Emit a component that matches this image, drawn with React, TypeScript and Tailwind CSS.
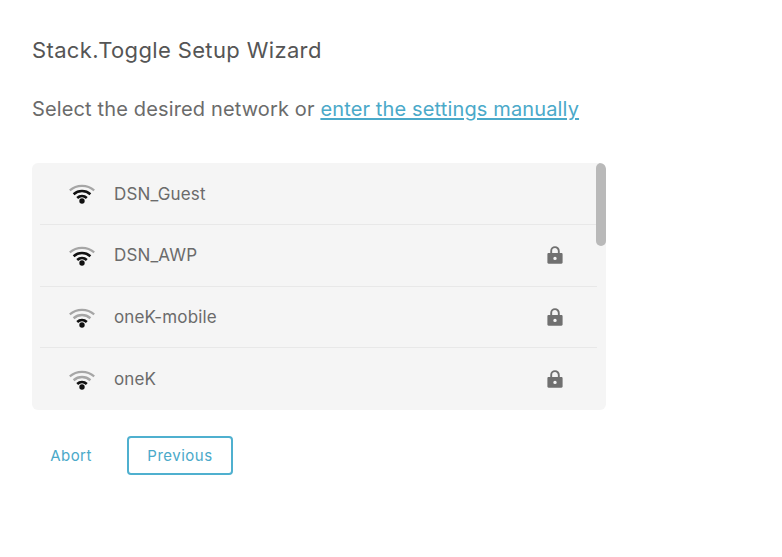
const networks = [
  { name: "DSN_Guest", secure: false, strength: 3 },
  { name: "DSN_AWP", secure: true, strength: 3 },
  { name: "oneK-mobile", secure: true, strength: 2 },
  { name: "oneK", secure: true, strength: 2 },
];

function WifiIcon({ strength }: { strength: number }) {
  return (
    <svg width="26" height="20" viewBox="0 0 26 20" fill="none" strokeLinecap="butt">
      <path d="M.8 6.4C7.6.4 18.4.4 25.2 6.4" stroke="#a6a6a6" strokeWidth="2.2" />
      <path d="M4.6 10.2C9.4 6 16.6 6 21.4 10.2" stroke={strength > 2 ? "#111111" : "#a6a6a6"} strokeWidth="2.5" />
      <path d="M8.2 13.9C11 11.4 15 11.4 17.8 13.9" stroke="#111111" strokeWidth="2.7" />
      <circle cx="13" cy="17" r="2.7" fill="#111111" />
    </svg>
  );
}

function LockIcon() {
  return (
    <svg className="-translate-y-px" width="18" height="20" viewBox="0 0 18 20" fill="none">
      <path d="M5.2 9V5.9a3.8 3.8 0 0 1 7.6 0V9" stroke="#707070" strokeWidth="1.9" />
      <path
        fillRule="evenodd"
        d="M2.6 8h12.8c.7 0 1.2.5 1.2 1.2v8.4c0 .7-.5 1.2-1.2 1.2H2.6c-.7 0-1.2-.5-1.2-1.2V9.200c0-.7.5-1.2 1.2-1.2ZM9 11.700a1.700 1.700 0 1 0 0 3.400 1.700 1.700 0 0 0 0-3.400Z"
        fill="#707070"
      />
    </svg>
  );
}

export default function App() {
  return (
    <div className="h-[557px] w-[782px] overflow-hidden bg-white pl-8 pt-[37px] font-['Inter',sans-serif]">
      <h1 className="text-[22px] font-normal leading-[26px] tracking-[0.36px] text-[#555555]">
        Stack.Toggle Setup Wizard
      </h1>
      <p className="mt-[33px] text-[20px] leading-[26px] tracking-[0.14px] text-[#6b6b6b]">
        Select the desired network or{" "}
        <a className="text-[#4aa9c9] underline underline-offset-2">enter the settings manually</a>
      </p>

      {/* network list */}
      <div className="relative mt-[41px] w-[574px] overflow-hidden rounded-md bg-[#f5f5f5] pl-2 pr-[9px]">
        {networks.map((n, i) => (
          <div
            key={n.name}
            className={`flex h-[61.75px] items-center pl-[29px] pr-[33px] pt-[2px] ${
              i < networks.length - 1 ? "border-b border-[#e8e8e8]" : ""
            }`}
          >
            <WifiIcon strength={n.strength} />
            <span className="ml-[19px] flex-1 text-[17px] tracking-[0.15px] text-[#6b6b6b]">
              {n.name}
            </span>
            {n.secure && <LockIcon />}
          </div>
        ))}
        <div className="absolute right-0 top-0 h-[83px] w-[10px] rounded-md bg-[#b9b9b9]" />
      </div>

      <div className="mt-[26px] flex items-center">
        <button type="button" className="ml-[18px] w-[42px] pt-px text-[15px] tracking-[0.45px] text-[#4aa9c9]">
          Abort
        </button>
        <button
          type="button"
          className="ml-[35px] h-[39px] w-[106px] rounded border-2 border-[#4fb0cf] pt-px text-[15px] tracking-[0.5px] text-[#4aa9c9]"
        >
          Previous
        </button>
      </div>
    </div>
  );
}
